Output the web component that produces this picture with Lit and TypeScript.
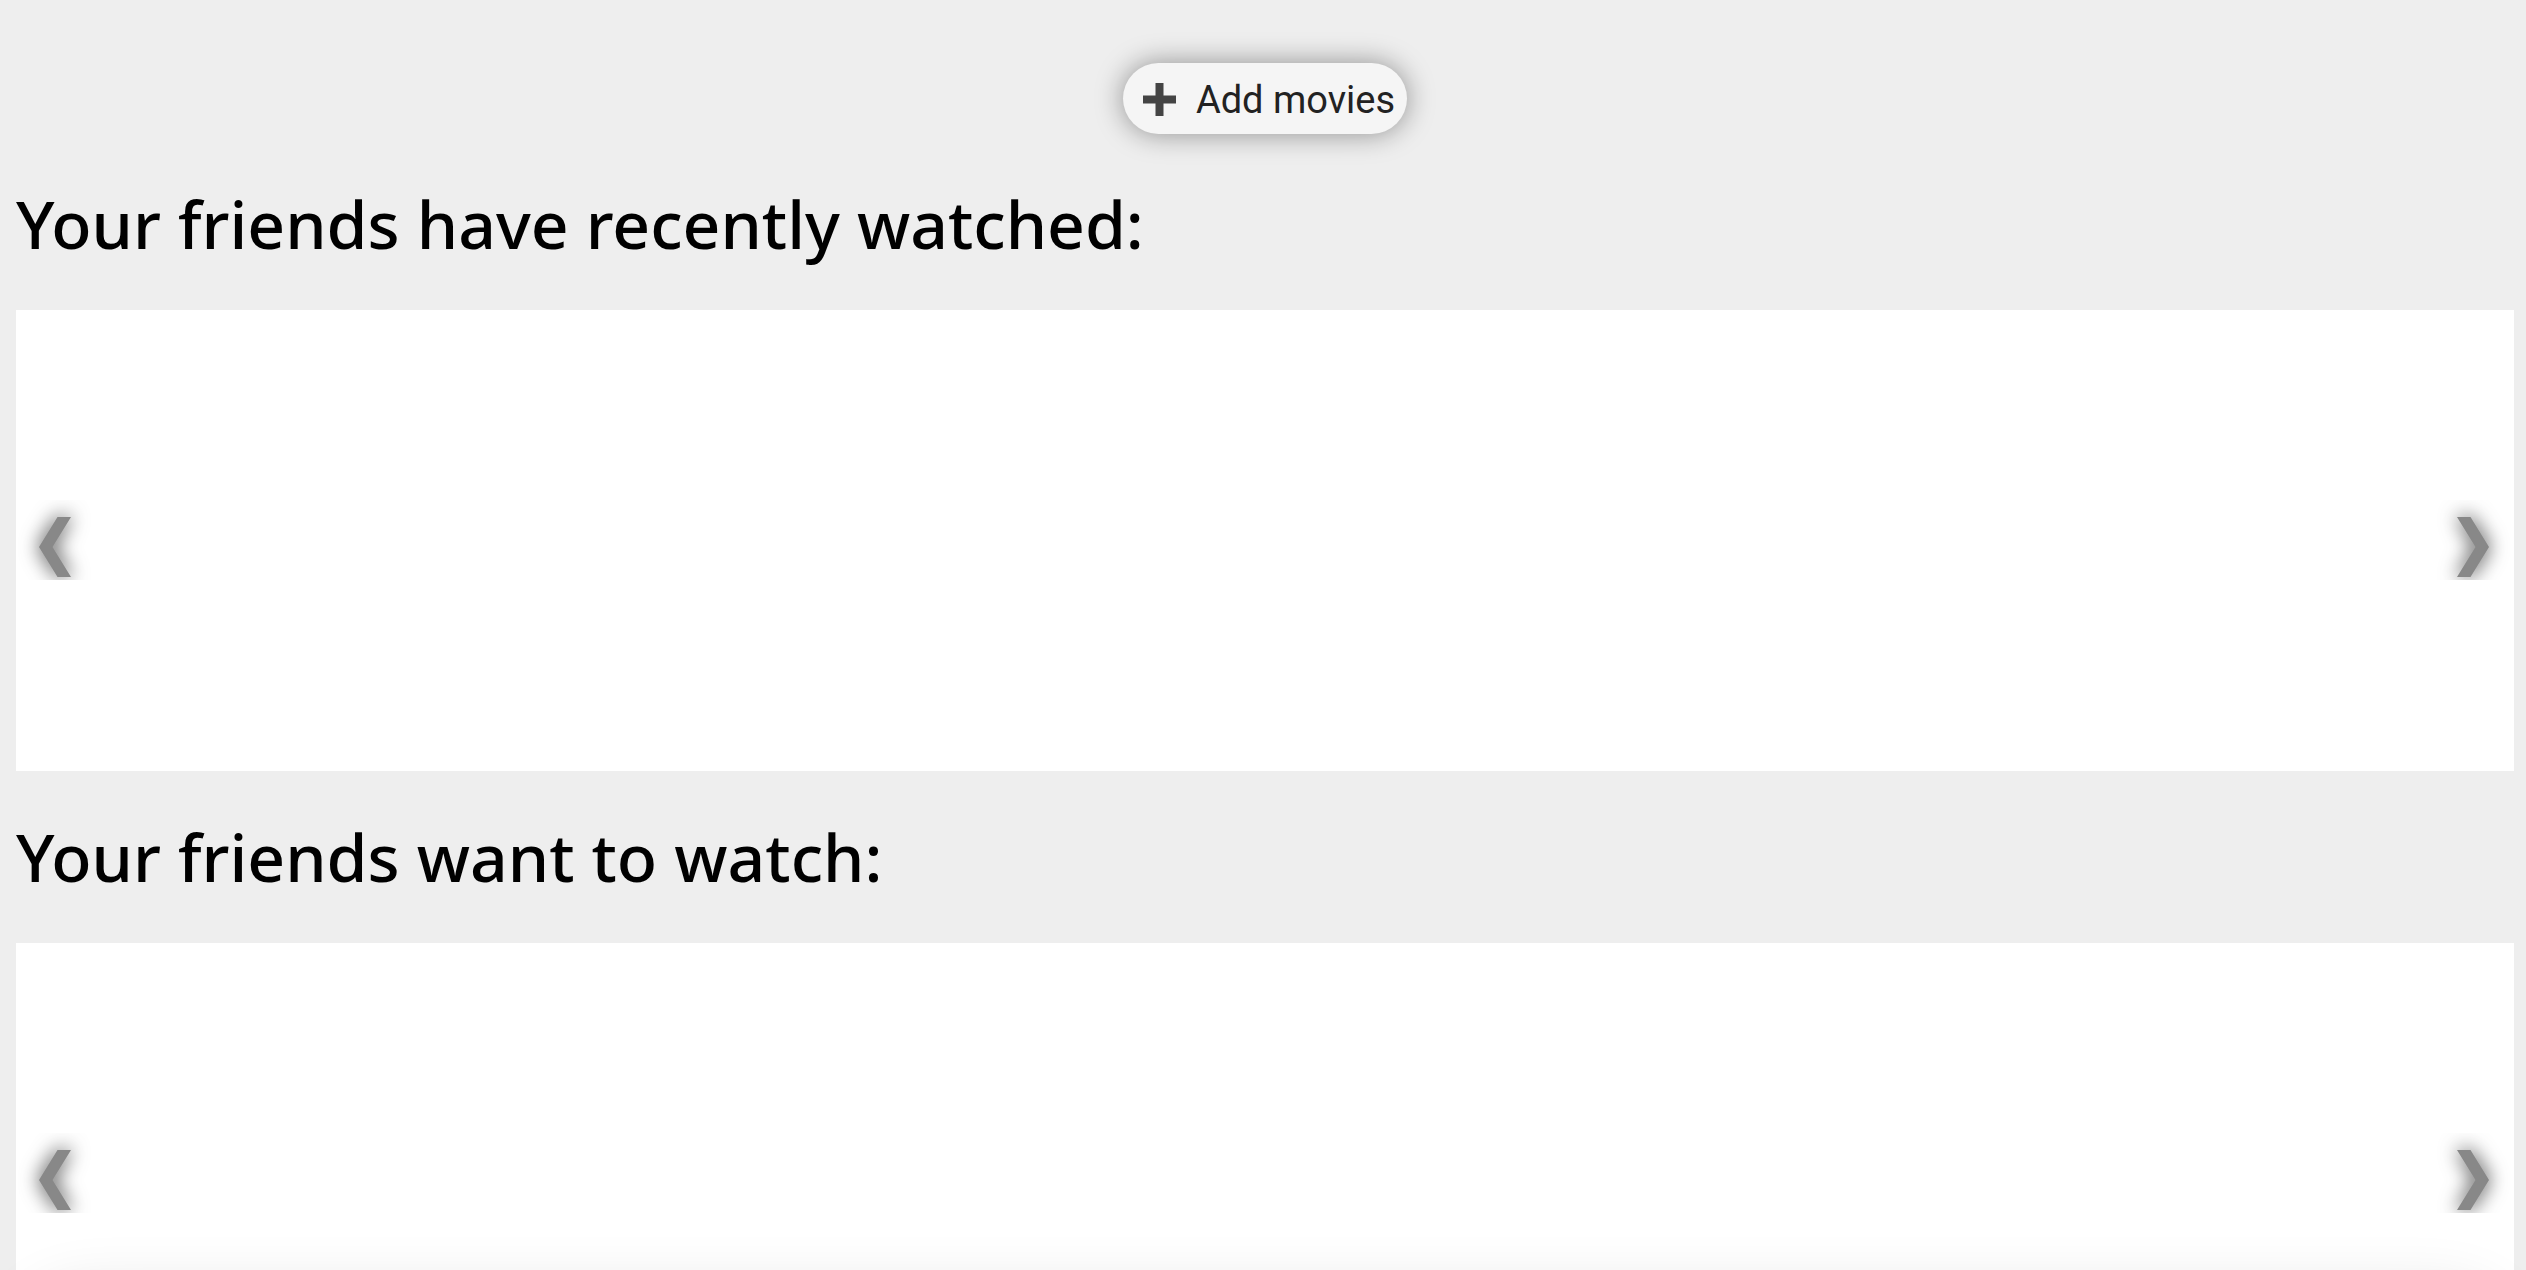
import { LitElement, html, css, svg } from "lit";
import { customElement, property } from "lit/decorators.js";

@customElement("movie-shelf")
export class MovieShelf extends LitElement {
  @property() heading = "";

  static styles = css`
    :host {
      display: block;
    }
    .heading {
      margin: 0;
      padding: 36px 0 38px;
      color: #000;
      font: 500 66px/98px "Noto Sans", sans-serif;
    }
    .panel {
      display: flex;
      align-items: center;
      justify-content: space-between;
      min-height: 460px;
      padding-bottom: 1px;
      background: #fff;
    }
    .arrow {
      width: 80px;
      height: 80px;
      padding: 0;
      border: 0;
      background: none;
      cursor: pointer;
    }
    .icon {
      display: block;
      width: 80px;
      height: 80px;
      overflow: hidden;
    }
    .chevron {
      fill: #888;
      filter: drop-shadow(0 0 10px rgba(0, 0, 0, 0.8));
    }
  `;

  private arrow(label: string, points: string) {
    return html`<button class="arrow" type="button" aria-label=${label}>
      <svg class="icon" viewBox="0 0 80 80" aria-hidden="true">
        ${svg`<polygon class="chevron" points=${points}></polygon>`}
      </svg>
    </button>`;
  }

  render() {
    return html`
      <h2 class="heading">${this.heading}</h2>
      <div class="panel">
        ${this.arrow("Previous movies", "41.500,17 55,17 36.500,47 55,77 41.500,77 23,47")}
        ${this.arrow("Next movies", "23,17 36.500,17 55,47 36.500,77 23,77 41.500,47")}
      </div>
    `;
  }
}

@customElement("app-root")
export class AppRoot extends LitElement {
  static styles = css`
    :host {
      display: block;
      height: 100vh;
      overflow: hidden;
      background: #eee;
    }
    .page {
      padding: 63px 12px 0 16px;
    }
    .toolbar {
      display: flex;
      justify-content: center;
      padding-bottom: 4px;
    }
    .add {
      display: flex;
      align-items: center;
      gap: 20px;
      height: 71px;
      padding: 2px 12px 0 20px;
      border: 0;
      border-radius: 36px;
      background: #f5f5f5;
      box-shadow: 0 0 28px rgba(0, 0, 0, 0.4);
      color: #222;
      font: 400 38px/48px Roboto, sans-serif;
      cursor: pointer;
    }
    .plus {
      width: 33px;
      height: 33px;
    }
    .dock {
      position: fixed;
      top: calc(100vh + 20px);
      left: 16px;
      right: 12px;
      height: 140px;
      border-radius: 70px;
      box-shadow: 0 0 60px rgba(0, 0, 0, 0.12);
    }
  `;

  render() {
    return html`
      <main class="page">
        <div class="toolbar">
          <button class="add" type="button">
            <svg class="plus" viewBox="0 0 33 33" aria-hidden="true">
              <path fill="#444" d="M12.500 0h8v12.500h12.500v8h-12.500v12.500h-8v-12.500h-12.500v-8h12.500z"></path>
            </svg>
            <span>Add movies</span>
          </button>
        </div>
        <movie-shelf heading="Your friends have recently watched:"></movie-shelf>
        <movie-shelf heading="Your friends want to watch:"></movie-shelf>
      </main>
      <div class="dock"></div>
    `;
  }
}
